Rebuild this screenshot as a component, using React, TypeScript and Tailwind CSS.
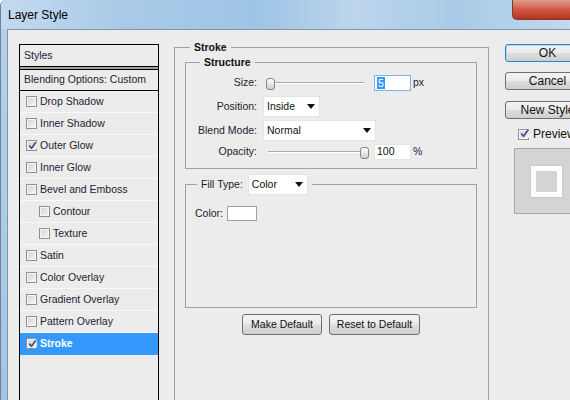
import React from 'react'

const items = [
  { label: 'Drop Shadow' },
  { label: 'Inner Shadow' },
  { label: 'Outer Glow', checked: true },
  { label: 'Inner Glow' },
  { label: 'Bevel and Emboss' },
  { label: 'Contour', indent: true },
  { label: 'Texture', indent: true },
  { label: 'Satin' },
  { label: 'Color Overlay' },
  { label: 'Gradient Overlay' },
  { label: 'Pattern Overlay' },
  { label: 'Stroke', checked: true, selected: true },
]

function CheckBox({ checked }: { checked?: boolean }) {
  return (
    <span className="w-[11px] h-[11px] shrink-0 border border-[#8e8f8f] bg-[#f6f6f6] p-[1px] flex">
      <span className="flex-1 bg-gradient-to-br from-[#d6d6d6] to-[#f2f2f2] flex items-center justify-center">
        {checked && (
          <svg width="9" height="9" viewBox="0 0 9 9" className="-mt-[1px]">
            <path d="M1.3 4.6 L3.6 7.2 L7.8 1.2" fill="none" stroke="#3e4f8e" strokeWidth="1.7" />
          </svg>
        )}
      </span>
    </span>
  )
}

function Caret() {
  return (
    <svg width="8" height="5" viewBox="0 0 8 5">
      <polygon points="0,0 8,0 4,5" fill="#111" />
    </svg>
  )
}

function Select({ value, className }: { value: string; className: string }) {
  return (
    <div className={`${className} h-[21px] bg-white border border-[#e4e4e4] flex items-center justify-between pl-[3px] pr-[4px] text-[#111]`}>
      <span>{value}</span>
      <Caret />
    </div>
  )
}

function Slider({ right }: { right?: boolean }) {
  return (
    <div className="relative w-[103px] h-[16px] shrink-0">
      <div className="absolute left-[2px] right-[5px] top-[7px] h-[2px] bg-[#a9a9a9] border-b border-white" />
      <div
        className={`absolute top-[3px] w-[9px] h-[12px] rounded-[3px] border border-[#858585] bg-gradient-to-b from-white to-[#cfcfcf] ${right ? 'right-0' : 'left-0'}`}
      />
    </div>
  )
}

function DlgButton({ label, className }: { label: string; className: string }) {
  return (
    <div
      className={`${className} rounded-[3px] border flex items-center justify-center bg-[linear-gradient(#f3f3f3_0%,#ebebeb_48%,#dddddd_52%,#cfcfcf_100%)] text-[#111]`}
    >
      {label}
    </div>
  )
}

export default function App() {
  return (
    <div className="w-[570px] h-[400px] overflow-hidden bg-[#a9c9e6] font-['Liberation_Sans',Arial,sans-serif] text-[10.5px] text-[#1c1c30] rounded-tl-[6px] border-l border-[#6d8296]">
      {/* Title bar */}
      <div className="h-[29px] relative flex items-center pl-[7px] pt-[1px] bg-[linear-gradient(90deg,#c3daef_0%,#a8cae7_22%,#9ec4e5_45%,#bcd5ec_62%,#a9cbe7_80%,#c2d9ee_100%)]">
        <span className="text-[12px] text-black">Layer Style</span>
        <div className="absolute right-0 top-0 w-[58px] h-[20px] rounded-bl-[5px] border-l border-b border-[#7a3a30] bg-gradient-to-b from-[#e19a8b] via-[#cf5a44] to-[#b8321e]" />
      </div>

      <div className="flex h-[371px]">
        {/* window frame */}
        <div className="w-[6px] shrink-0 bg-gradient-to-b from-[#b5d1ea] to-[#a4c6e4]" />

        <div className="flex-1 flex bg-[#ececec] border-l border-t border-[#8396a9] overflow-hidden">
          {/* Styles list */}
          <div className="ml-[11px] mt-[14px] w-[140px] h-[400px] shrink-0 border border-black">
            <div className="h-[22px] border-b border-black flex items-center pl-[4px]">Styles</div>
            <div className="h-[2px] bg-[#a4a4a4]" />
            <div className="h-[22px] border-y border-black flex items-center pl-[4px]">Blending Options: Custom</div>
            {items.map((it) => (
              <div
                key={it.label}
                className={`h-[22px] border-b flex items-center gap-[3px] ${it.indent ? 'pl-[19px]' : 'pl-[6px]'} ${
                  it.selected ? 'bg-[#3399ff] border-[#3399ff] text-white font-bold' : 'border-[#f9f9f9]'
                }`}
              >
                <CheckBox checked={it.checked} />
                <span>{it.label}</span>
              </div>
            ))}
          </div>

          {/* Stroke settings */}
          <fieldset className="ml-[15px] mt-[11px] w-[315px] h-[400px] shrink-0 border border-[#a0a0a0] pl-[10px]">
            <legend className="ml-[5px] px-[4px] font-bold leading-[13px] text-[#111]">Stroke</legend>

            <fieldset className="mt-[2px] w-[292px] border border-[#a0a0a0] pb-[8px]">
              <legend className="ml-[14px] px-[4px] font-bold leading-[13px] text-[#111]">Structure</legend>

              <div className="mt-[6px] flex items-center h-[16px]">
                <span className="w-[71px] text-right">Size:</span>
                <div className="ml-[9px]">
                  <Slider />
                </div>
                <div className="ml-[5px] w-[37px] h-[16px] border border-[#7eb4ea] bg-white flex items-center pl-[2px]">
                  <span className="bg-[#3399ff] text-white px-[1px] leading-[12px]">5</span>
                </div>
                <span className="ml-[2px]">px</span>
              </div>

              <div className="mt-[5px] flex items-center">
                <span className="w-[71px] text-right">Position:</span>
                <Select value="Inside" className="ml-[6px] w-[57px]" />
              </div>

              <div className="mt-[3px] flex items-center">
                <span className="w-[71px] text-right">Blend Mode:</span>
                <Select value="Normal" className="ml-[6px] w-[113px]" />
              </div>

              <div className="mt-[3px] flex items-center h-[16px]">
                <span className="w-[71px] text-right">Opacity:</span>
                <div className="ml-[9px]">
                  <Slider right />
                </div>
                <div className="ml-[5px] w-[37px] h-[16px] border border-[#e4e4e4] bg-white flex items-center pl-[2px] text-[#111]">
                  100
                </div>
                <span className="ml-[2px]">%</span>
              </div>
            </fieldset>

            <fieldset className="mt-[5px] w-[292px] border border-[#a0a0a0]">
              <legend className="ml-[11px] px-[4px] flex items-center">
                <span>Fill Type:</span>
                <Select value="Color" className="ml-[5px] w-[60px]" />
              </legend>
              <div className="h-[112px] pt-[11px] pl-[9px]">
                <div className="flex items-center h-[15px]">
                  <span>Color:</span>
                  <div className="ml-[4px] w-[30px] h-[15px] bg-white border border-[#a0a0a0]" />
                </div>
              </div>
            </fieldset>

            <div className="mt-[6px] w-[292px] flex justify-center gap-[7px]">
              <DlgButton label="Make Default" className="w-[80px] h-[21px] border-[#707070]" />
              <DlgButton label="Reset to Default" className="w-[91px] h-[21px] border-[#707070]" />
            </div>
          </fieldset>

          {/* Right buttons */}
          <div className="ml-[16px] w-[100px] shrink-0 pt-[14px] text-[12px]">
            <DlgButton label="OK" className="w-[85px] h-[18px] border-[#3c7fb1] shadow-[inset_0_0_0_1px_#a8dcf5]" />
            <DlgButton label="Cancel" className="mt-[10px] w-[85px] h-[18px] border-[#707070]" />
            <DlgButton label="New Style" className="mt-[11px] w-[85px] h-[18px] border-[#707070]" />
            <div className="mt-[7px] h-[16px] flex items-center pl-[13px] gap-[4px] text-[#111]">
              <CheckBox checked />
              <span>Preview</span>
            </div>
            <div className="ml-[9px] mt-[6px] w-[70px] h-[66px] border border-[#a8a8a8] bg-[#d4d4d4] pt-[17px] pl-[16px]">
              <div className="w-[31px] h-[31px] border-[5px] border-white bg-[#d4d4d4] shadow-[0_0_2px_rgba(0,0,0,0.15)]" />
            </div>
          </div>
        </div>
      </div>
    </div>
  )
}
